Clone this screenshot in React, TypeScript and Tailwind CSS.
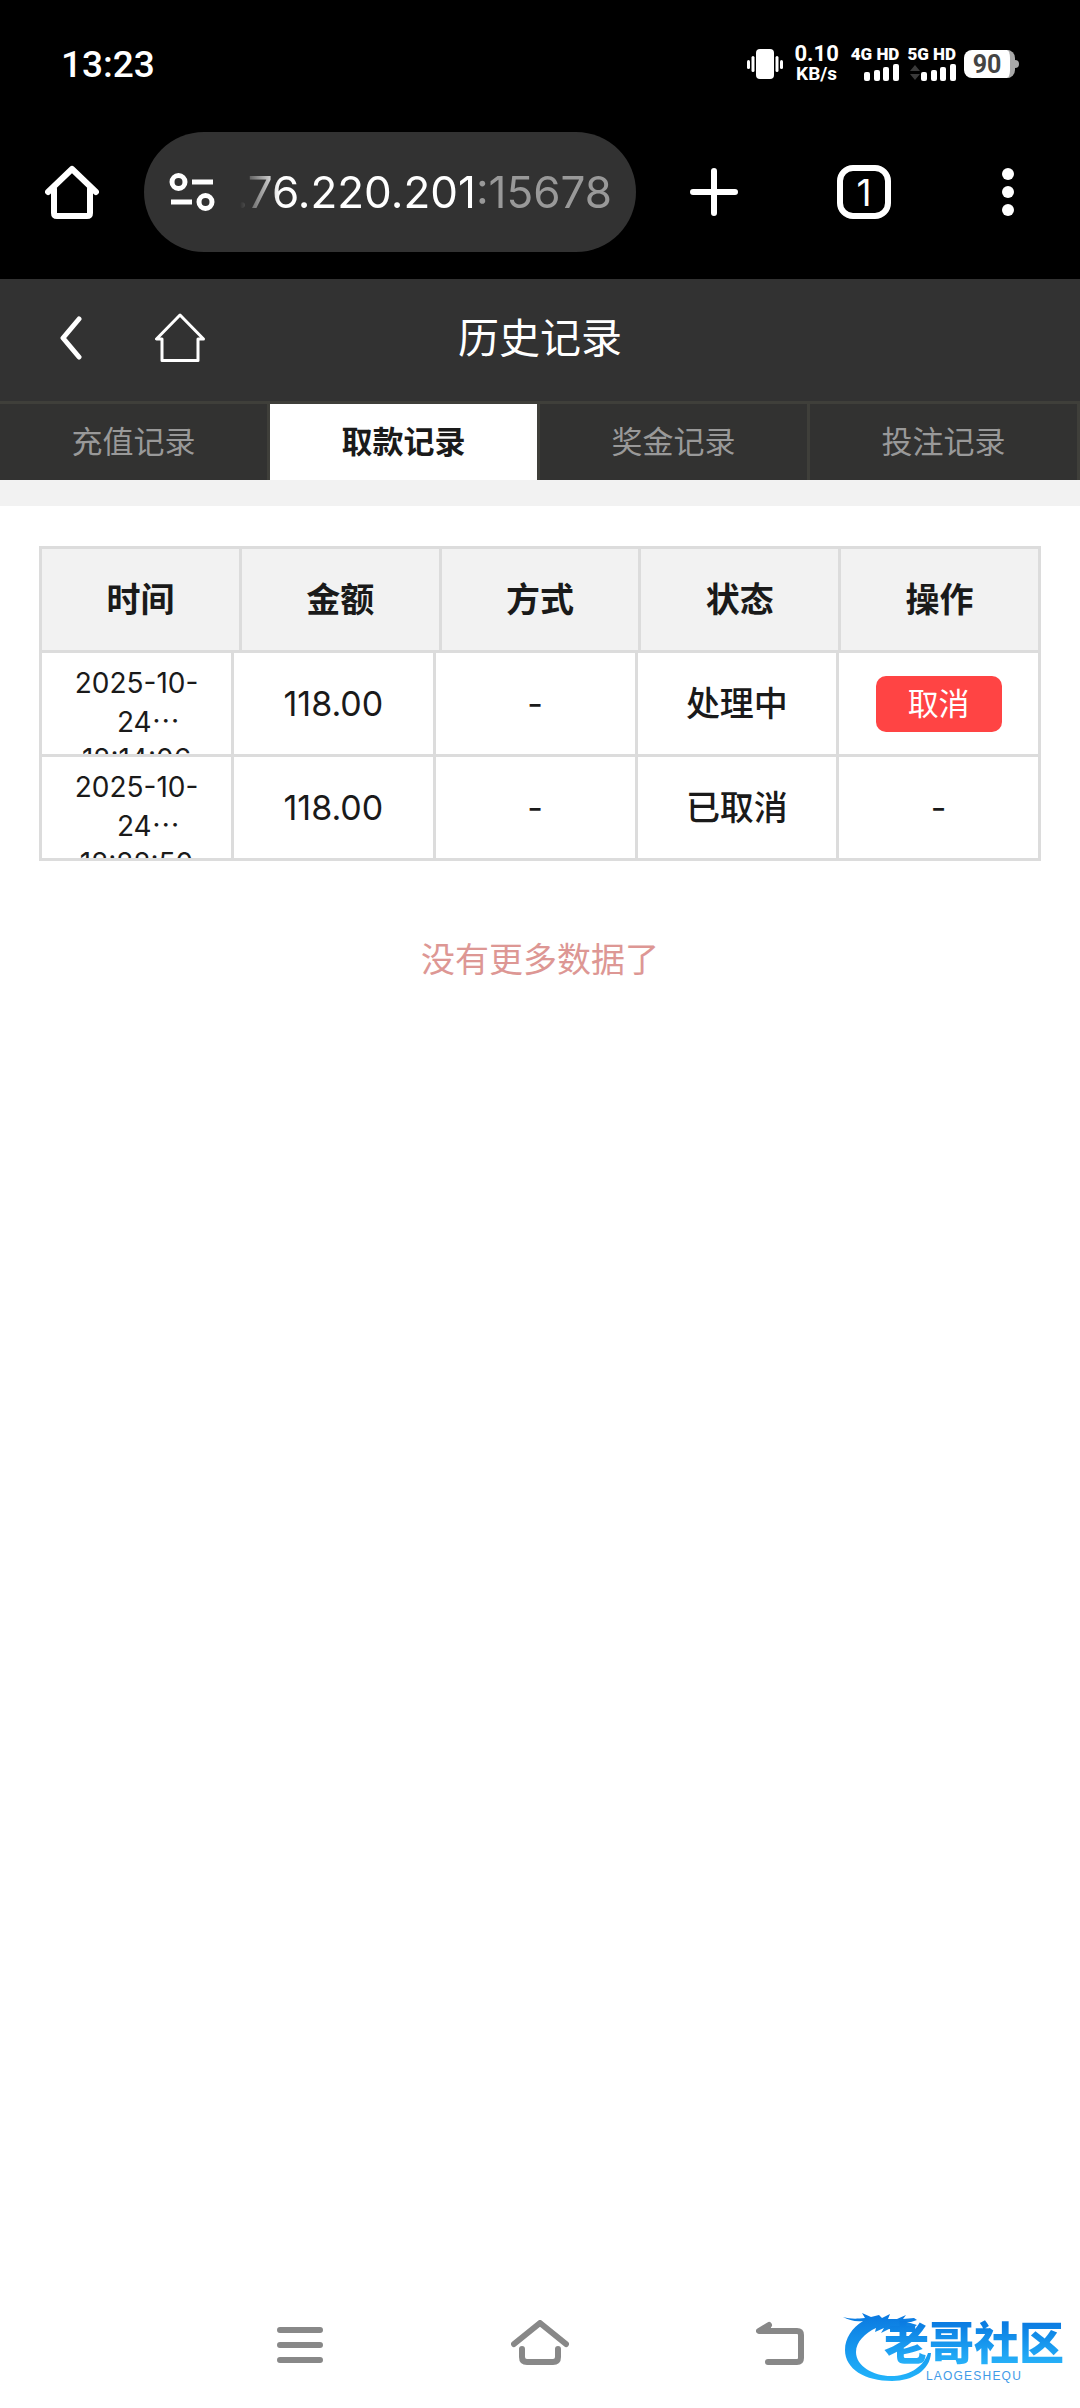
import { useState } from 'react';

// Type definitions
interface WithdrawRecord {
  id: string;
  date: string;
  day: string;
  time: string;
  amount: string;
  method: string;
  status: string;
  cancelable: boolean;
}

const tabs = ['充值记录', '取款记录', '奖金记录', '投注记录'];

const columns = ['时间', '金额', '方式', '状态', '操作'];

const records: WithdrawRecord[] = [
  {
    id: '1',
    date: '2025-10-',
    day: '24',
    time: '12:14:06',
    amount: '118.00',
    method: '-',
    status: '处理中',
    cancelable: true,
  },
  {
    id: '2',
    date: '2025-10-',
    day: '24',
    time: '12:22:50',
    amount: '118.00',
    method: '-',
    status: '已取消',
    cancelable: false,
  },
];

function SignalBars() {
  return (
    <svg width="36" height="17" viewBox="0 0 36 17" fill="#fff">
      <rect x="1" y="8" width="6" height="9" rx="2" />
      <rect x="11" y="6" width="6" height="11" rx="2" />
      <rect x="20" y="3" width="6" height="14" rx="2" />
      <rect x="30" y="0" width="6" height="17" rx="2" />
    </svg>
  );
}

function StatusBar() {
  return (
    <div className="flex h-32 items-center justify-between px-[61px] font-['Roboto',sans-serif] text-white">
      <span className="text-[37px] leading-none font-medium">13:23</span>
      <div className="flex items-center">
        <svg width="36" height="30" viewBox="0 0 36 30" fill="#fff">
          <rect x="9" y="0" width="18" height="30" rx="4" />
          <rect x="0" y="11" width="3" height="9" rx="1.5" />
          <rect x="4.5" y="7" width="3" height="16" rx="1.5" />
          <rect x="28.5" y="7" width="3" height="16" rx="1.5" />
          <rect x="33" y="11" width="3" height="9" rx="1.5" />
        </svg>
        <div className="ml-3 flex flex-col items-center font-bold">
          <span className="text-[22px] leading-5">0.10</span>
          <span className="text-[19px] leading-5">KB/s</span>
        </div>
        <div className="ml-3 flex flex-col items-end gap-1">
          <span className="text-[17px] leading-3 font-black">4G HD</span>
          <SignalBars />
        </div>
        <div className="ml-2 flex flex-col items-end gap-1">
          <span className="text-[17px] leading-3 font-black">5G HD</span>
          <div className="flex items-center">
            <svg width="10" height="15" viewBox="0 0 10 15" fill="#3a3a3a">
              <path d="M5 0 10 6H0zM5 15 0 9h10z" />
            </svg>
            <SignalBars />
          </div>
        </div>
        <div className="ml-2 flex items-center">
          <div className="flex h-7 w-[51px] items-center justify-center rounded-lg border-r-[5px] border-[#a8a8a8] bg-white text-[25px] leading-none font-bold text-[#444]">
            90
          </div>
          <div className="h-2 w-1 rounded-r bg-[#a8a8a8]" />
        </div>
      </div>
    </div>
  );
}

function BrowserBar() {
  return (
    <div className="flex items-center pt-1 pb-[27px] text-white">
      <button aria-label="主页" className="flex w-36 justify-center">
        <svg width="54" height="54" viewBox="0 0 54 54" fill="none" stroke="#fff" strokeWidth="6" strokeLinecap="round" strokeLinejoin="round">
          <path d="M3 27 27 4l24 23" />
          <path d="M9 24v24q0 3 3 3h30q3 0 3-3V24" />
        </svg>
      </button>
      <div className="flex h-30 min-w-0 flex-1 items-center rounded-full bg-[#323232] px-6">
        <svg width="48" height="40" viewBox="0 0 48 40" fill="none" stroke="#fff" strokeWidth="5" className="shrink-0">
          <circle cx="10.500" cy="10" r="6.500" />
          <path d="M24 10h21M3 30h21" />
          <circle cx="37.500" cy="30" r="6.500" />
        </svg>
        <div className="ml-6 flex min-w-0 flex-1 justify-end overflow-hidden [mask-image:linear-gradient(to_right,transparent,#000_40px)]">
          <span className="text-[44px] leading-[60px] whitespace-nowrap">
            .76.220.201<span className="text-[#999]">:15678</span>
          </span>
        </div>
      </div>
      <button aria-label="新标签页" className="flex w-39 justify-center">
        <svg width="48" height="48" viewBox="0 0 48 48" stroke="#fff" strokeWidth="6" strokeLinecap="round">
          <path d="M24 3v42M3 24h42" />
        </svg>
      </button>
      <div className="flex w-36 justify-center">
        <button className="flex size-[54px] items-center justify-center rounded-2xl border-6 border-white text-[37px] leading-none">
          1
        </button>
      </div>
      <button aria-label="菜单" className="flex w-36 justify-center">
        <svg width="12" height="48" viewBox="0 0 12 48" fill="#fff">
          <circle cx="6" cy="6" r="6" />
          <circle cx="6" cy="24" r="6" />
          <circle cx="6" cy="42" r="6" />
        </svg>
      </button>
    </div>
  );
}

function PageHeader() {
  return (
    <header className="grid h-[122px] grid-cols-3 items-center bg-[#323232] pb-1 text-white">
      <div className="flex items-center gap-[72px] pl-[59px]">
        <a href="#back" aria-label="返回">
          <svg width="24" height="44" viewBox="0 0 24 44" fill="none" stroke="#fff" strokeWidth="5" strokeLinecap="round" strokeLinejoin="round">
            <path d="M20 3 4 22l16 19" />
          </svg>
        </a>
        <a href="#home" aria-label="首页">
          <svg width="50" height="50" viewBox="0 0 50 50" fill="none" stroke="#fff" strokeWidth="3" strokeLinejoin="round">
            <path d="M25 2 1.500 26H7v21.500h36V26h5.500z" />
          </svg>
        </a>
      </div>
      <h1 className="text-center text-[41px] leading-none">历史记录</h1>
    </header>
  );
}

function RecordTable() {
  return (
    <table className="block border-t-3 border-l-3 border-[#dcdcdc] text-center text-[#1a1a1a]">
      <thead className="block">
        <tr className="flex h-[104px] bg-[#f2f2f2]">
          {columns.map((column) => (
            <th
              key={column}
              scope="col"
              className="flex flex-1 items-center justify-center border-r-3 border-b-3 border-[#dcdcdc] text-[34px] leading-10 font-bold"
            >
              {column}
            </th>
          ))}
        </tr>
      </thead>
      <tbody className="block">
        {records.map((record) => (
          <tr key={record.id} className="flex h-[104px]">
            <td className="w-48 overflow-hidden border-r-3 border-b-3 border-[#dcdcdc] pt-3 text-[28px] leading-[37px]">
              <span className="block">{record.date}</span>
              <span className="block">
                {'\u00a0\u00a0\u00a0'}
                {record.day}
                <span className="font-['Noto_Sans_CJK_SC',sans-serif]">…</span>
              </span>
              <span className="block">{record.time}</span>
            </td>
            <td className="flex flex-1 items-center justify-center border-r-3 border-b-3 border-[#dcdcdc] text-[34px] leading-10">
              {record.amount}
            </td>
            <td className="flex flex-1 items-center justify-center border-r-3 border-b-3 border-[#dcdcdc] text-[34px] leading-10">
              {record.method}
            </td>
            <td className="flex flex-1 items-center justify-center border-r-3 border-b-3 border-[#dcdcdc] text-[34px] leading-10 font-medium">
              {record.status}
            </td>
            <td className="flex flex-1 items-center justify-center border-r-3 border-b-3 border-[#dcdcdc] text-[34px] leading-10">
              {record.cancelable ? (
                <button className="h-14 rounded-[10px] bg-[#ff4444] px-8 text-[31px] leading-10 text-white">取消</button>
              ) : (
                '-'
              )}
            </td>
          </tr>
        ))}
      </tbody>
    </table>
  );
}

function SiteLogo() {
  return (
    <div className="absolute right-4 bottom-6 flex items-end">
      <svg width="90" height="72" viewBox="0 0 90 72" className="-mr-[49px]">
        <defs>
          <linearGradient id="dragon" x1="0" y1="0" x2="0" y2="1">
            <stop offset="0" stopColor="#0a78e0" />
            <stop offset="1" stopColor="#22b4fb" />
          </linearGradient>
        </defs>
        <path
          fill="url(#dragon)"
          d="M0 5c7 2 13 2 22 1L19 1l9 4 8-2 3 3 8-4-2 5 9 0 9-4-3 4 11-1 3 2-6 2-4 0 10 3-4 3-9-1-8 3-7-1-8 4 3-5-9 4 1-4C22 21 13 30 13 40c0 14 17 24 35 24 17 0 32-8 37-23l3 0c-1 17-18 28-39 28C22 69 2 57 2 38 2 26 9 16 20 9 12 10 6 8 0 5z"
        />
      </svg>
      <div className="flex flex-col items-center">
        <span className="bg-linear-to-b from-[#0a78e0] to-[#2ab6fb] bg-clip-text text-[45px] leading-[48px] font-black text-transparent">
          老哥社区
        </span>
        <span className="font-['Liberation_Sans',sans-serif] text-[12px] leading-4 tracking-widest text-[#3f9be8]">
          LAOGESHEQU
        </span>
      </div>
    </div>
  );
}

function SystemNav() {
  return (
    <nav className="relative h-[126px]">
      <div className="mx-auto grid h-full w-2/3 grid-cols-3 place-items-center">
        <button aria-label="最近任务">
          <svg width="46" height="36" viewBox="0 0 46 36" stroke="#888" strokeWidth="6" strokeLinecap="round">
            <path d="M3 3h40M3 18h40M3 33h40" />
          </svg>
        </button>
        <button aria-label="桌面">
          <svg width="58" height="50" viewBox="0 0 58 50" fill="none" stroke="#888" strokeWidth="6" strokeLinecap="round" strokeLinejoin="round">
            <path d="M3 24 29 3l26 21" />
            <path d="M11 29v8q0 5 5 5h26q5 0 5-5v-8" />
          </svg>
        </button>
        <button aria-label="返回上一级">
          <svg width="48" height="50" viewBox="0 0 48 50" fill="none" stroke="#888" strokeWidth="6" strokeLinecap="round" strokeLinejoin="round">
            <path d="M13 5 3 11h38q4 0 4 4v23q0 4-4 4H12" />
            <path fill="#888" strokeWidth="2" d="M14 5v6H4z" />
          </svg>
        </button>
      </div>
      <SiteLogo />
    </nav>
  );
}

export default function App() {
  const [activeTab, setActiveTab] = useState<string>('取款记录');

  return (
    <div className="flex min-h-screen flex-col bg-white font-['Inter','Noto_Sans_CJK_SC',sans-serif]">
      <div className="bg-black">
        <StatusBar />
        <BrowserBar />
      </div>

      <PageHeader />

      {/* Record type tabs */}
      <div className="grid grid-cols-4 border-t-3 border-[#3f3f3a]">
        {tabs.map((tab) => (
          <button
            key={tab}
            onClick={() => setActiveTab(tab)}
            className={`h-[76px] border-r-3 border-[#3f3f3a] text-[31px] leading-10 ${
              tab === activeTab ? 'bg-white font-bold text-[#1a1a1a]' : 'bg-[#323231] text-[#999]'
            }`}
          >
            {tab}
          </button>
        ))}
      </div>
      <div className="h-[26px] bg-[#f2f2f2]" />

      <main className="flex-1 px-[39px] pt-10">
        <RecordTable />
        <p className="mt-[79px] text-center text-[34px] leading-10 text-[#dd9794]">没有更多数据了</p>
      </main>

      <SystemNav />
    </div>
  );
}
